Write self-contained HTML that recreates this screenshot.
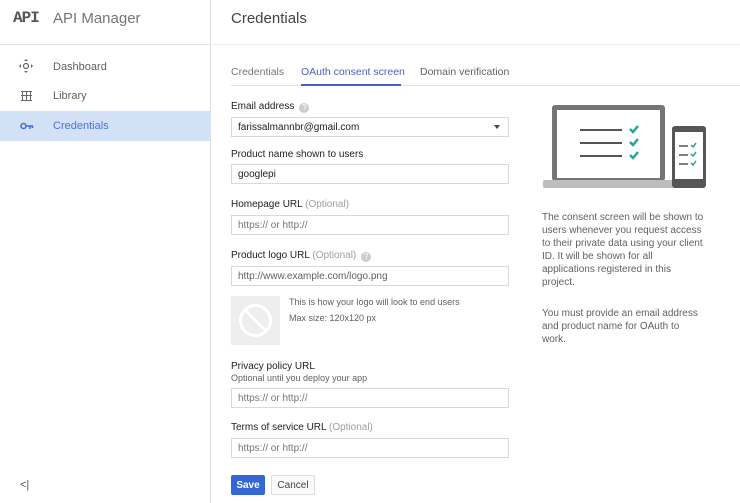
<!DOCTYPE html>
<html><head><style>
*{margin:0;padding:0;box-sizing:border-box}
body{width:740px;height:503px;overflow:hidden;background:#fff;font-family:"Liberation Sans",sans-serif;position:relative;color:#212121}
.a{position:absolute}
.side{left:0;top:0;width:211px;height:503px;border-right:1px solid #e0e0e0}
.lab{font-size:10px;color:#212121;position:absolute;left:231px}
.opt{color:#9e9e9e}
.inp{position:absolute;left:231px;width:278px;height:20px;border:1px solid #d9d9d9;font-size:10px;color:#616161;padding:4px 6px;line-height:11px}
.ph{color:#757575}
.nav{position:absolute;left:53px;font-size:11px;color:#616161}
.q{display:inline-block;width:10px;height:10px;border-radius:50%;background:#ccc;color:#fff;font-size:8px;text-align:center;line-height:10px;margin-left:5px;vertical-align:-1px}
.rt{position:absolute;left:542px;width:163px;font-size:10px;line-height:13px;color:#616161}
.btn{display:flex;align-items:center;justify-content:center;font-size:10px;border-radius:2px}
</style></head><body>
<div class="a side"></div>
<div class="a" style="left:0;top:44px;width:211px;height:1px;background:#e0e0e0"></div>
<div class="a" style="left:212px;top:44px;width:528px;height:1px;background:#eee"></div>
<div class="a" style="left:13px;top:9px;font-family:'Liberation Mono',monospace;font-weight:bold;font-size:16px;color:#555;letter-spacing:-1px">API</div>
<div class="a" style="left:53px;top:10px;font-size:15px;color:#757575">API Manager</div>
<div class="a" style="left:231px;top:10px;font-size:15px;color:#424242">Credentials</div>
<svg class="a" style="left:19px;top:59px" width="14" height="14" viewBox="0 0 14 14" fill="#666"><path d="M7 0l2 2H5zM7 14l2-2H5zM0 7l2-2v4zM14 7l-2-2v4z"/><circle cx="7" cy="7" r="2.5" fill="none" stroke="#666" stroke-width="1.2"/></svg>
<div class="nav" style="top:61px">Dashboard</div>
<svg class="a" style="left:21px;top:91px" width="11" height="10" viewBox="0 0 11 10" fill="#666"><rect x="0" y="0" width="11" height="1"/><rect x="0" y="4" width="11" height="1"/><rect x="0" y="9" width="11" height="1"/><rect x="1" y="0" width="1" height="10"/><rect x="5" y="0" width="1" height="10"/><rect x="9" y="0" width="1" height="10"/></svg>
<div class="nav" style="top:90px">Library</div>
<div class="a" style="left:0;top:111px;width:211px;height:30px;background:#d3e1f7"></div>
<svg class="a" style="left:20px;top:122px" width="14" height="8" viewBox="0 0 14 8"><circle cx="3.5" cy="4" r="2.5" fill="none" stroke="#3f6fd8" stroke-width="1.5"/><path d="M6 4h7M10 4v3M12.5 4v2" stroke="#3f6fd8" stroke-width="1.5"/></svg>
<div class="nav" style="top:120px;color:#4a73d6">Credentials</div>
<div class="a" style="left:20px;top:479px;font-size:11px;color:#555">&lt;|</div>

<div class="a" style="left:231px;top:85px;width:509px;height:1px;background:#e0e0e0"></div>
<div class="a" style="left:231px;top:66px;font-size:10.5px;color:#757575">Credentials</div>
<div class="a" style="left:301px;top:66px;font-size:10.5px;color:#4a5fc1">OAuth consent screen</div>
<div class="a" style="left:301px;top:84px;width:100px;height:2px;background:#4a5fc1"></div>
<div class="a" style="left:420px;top:66px;font-size:10.5px;color:#616161">Domain verification</div>

<div class="lab" style="top:101px">Email address<span class="q">?</span></div>
<div class="inp" style="top:117px;color:#212121">farissalmannbr@gmail.com<span style="position:absolute;right:8px;top:7px;border-left:3px solid transparent;border-right:3px solid transparent;border-top:4px solid #444"></span></div>
<div class="lab" style="top:149px">Product name shown to users</div>
<div class="inp" style="top:164px;color:#212121">googlepi</div>
<div class="lab" style="top:199px">Homepage URL <span class="opt">(Optional)</span></div>
<div class="inp ph" style="top:215px">https:// or http://</div>
<div class="lab" style="top:250px">Product logo URL <span class="opt">(Optional)</span><span class="q">?</span></div>
<div class="inp" style="top:266px">http://www.example.com/logo.png</div>
<div class="a" style="left:231px;top:296px;width:49px;height:49px;background:#eeeeee"></div>
<svg class="a" style="left:236px;top:301px" width="39" height="39" viewBox="0 0 39 39"><circle cx="19.5" cy="19.5" r="15" fill="none" stroke="#fff" stroke-width="3"/><path d="M9 9L30 30" stroke="#fff" stroke-width="3"/></svg>
<div class="a" style="left:289px;top:297px;font-size:9px;color:#616161">This is how your logo will look to end users</div>
<div class="a" style="left:289px;top:313px;font-size:9px;color:#616161">Max size: 120x120 px</div>
<div class="lab" style="top:361px">Privacy policy URL</div>
<div class="lab" style="top:373px;font-size:9px;color:#616161">Optional until you deploy your app</div>
<div class="inp ph" style="top:388px">https:// or http://</div>
<div class="lab" style="top:422px">Terms of service URL <span class="opt">(Optional)</span></div>
<div class="inp ph" style="top:438px">https:// or http://</div>
<div class="a btn" style="left:231px;top:475px;width:34px;height:20px;background:#3367d6;color:#fff;font-weight:bold">Save</div>
<div class="a btn" style="left:271px;top:475px;width:44px;height:20px;border:1px solid #ddd;background:#fafafa;color:#444">Cancel</div>

<svg class="a" style="left:540px;top:100px" width="170" height="92" viewBox="540 100 170 92">
<rect x="552" y="105" width="113" height="76" rx="3" fill="#757575"/>
<rect x="557" y="110" width="103" height="68" fill="#fff"/>
<rect x="543" y="180" width="131" height="8" rx="2" fill="#bdbdbd"/>
<g stroke="#555" stroke-width="2"><path d="M580 130h42M580 143h42M580 156h42"/></g>
<g stroke="#26a69a" stroke-width="2.5" fill="none"><path d="M630 129l3 3 5-6M630 142l3 3 5-6M630 155l3 3 5-6"/></g>
<rect x="672" y="126" width="34" height="62" rx="3" fill="#555"/>
<rect x="675" y="132" width="28" height="47" fill="#fff"/>
<g stroke="#555" stroke-width="1.5"><path d="M679 146h9M679 155h9M679 164h9"/></g>
<g stroke="#26a69a" stroke-width="1.5" fill="none"><path d="M691 145l2 2 3-4M691 154l2 2 3-4M691 163l2 2 3-4"/></g>
</svg>
<div class="rt" style="top:211px">The consent screen will be shown to users whenever you request access to their private data using your client ID. It will be shown for all applications registered in this project.</div>
<div class="rt" style="top:307px">You must provide an email address and product name for OAuth to work.</div>
</body></html>
